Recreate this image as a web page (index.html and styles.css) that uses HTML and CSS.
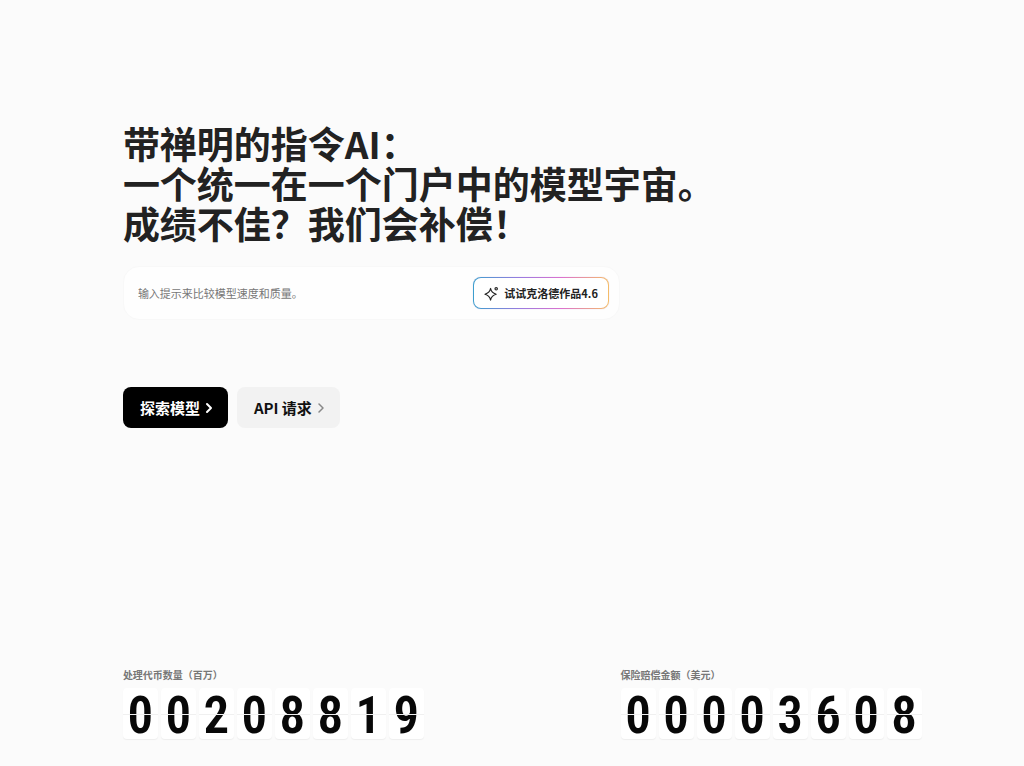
FILE: index.html
```html
<!DOCTYPE html>
<html lang="zh-CN">
<head>
<meta charset="utf-8">
<meta name="viewport" content="width=device-width, initial-scale=1">
<title>带禅明的指令AI</title>
<link rel="stylesheet" href="styles.css">
</head>
<body>
<main class="page">
  <section class="hero">
    <h1 class="title">带禅明的指令AI：<br>一个统一在一个门户中的模型宇宙。<br>成绩不佳？我们会补偿！</h1>
    <form class="prompt">
      <input class="prompt-input" type="text" aria-label="输入提示" placeholder="输入提示来比较模型速度和质量。">
      <button class="try" type="button">
        <svg class="spark" viewBox="0 0 16 16" aria-hidden="true"><path d="M7 2.6C7.7 6.3 9 7.7 13 8.8 9 9.9 7.7 11.3 7 15 6.3 11.3 5 9.9 1 8.8 5 7.7 6.3 6.3 7 2.6Z"/><circle cx="13" cy="3" r="1.3"/></svg>
        <span>试试克洛德作品4.6</span>
      </button>
    </form>
    <nav class="actions">
      <a class="btn btn-dark" href="#models">探索模型<svg class="chevron" viewBox="0 0 8 12" aria-hidden="true"><path d="M2 2l4 4-4 4"/></svg></a>
      <a class="btn btn-light" href="#api">API 请求<svg class="chevron" viewBox="0 0 8 12" aria-hidden="true"><path d="M2 2l4 4-4 4"/></svg></a>
    </nav>
  </section>
  <section class="stats">
    <div class="stat">
      <h2 class="stat-label">处理代币数量（百万）</h2>
      <div class="counter"><span class="digit">0</span><span class="digit">0</span><span class="digit">2</span><span class="digit">0</span><span class="digit">8</span><span class="digit">8</span><span class="digit">1</span><span class="digit">9</span></div>
    </div>
    <div class="stat">
      <h2 class="stat-label">保险赔偿金额（美元）</h2>
      <div class="counter"><span class="digit">0</span><span class="digit">0</span><span class="digit">0</span><span class="digit">0</span><span class="digit">3</span><span class="digit">6</span><span class="digit">0</span><span class="digit">8</span></div>
    </div>
  </section>
</main>
</body>
</html>
```
FILE: styles.css
```css
* { box-sizing: border-box; }
body {
  margin: 0;
  background: #fbfbfb;
  color: #222;
  font-family: "Noto Sans CJK SC", "Noto Sans", sans-serif;
}
.page {
  display: flex;
  flex-direction: column;
  justify-content: space-between;
  min-height: 100vh;
  padding: 123px 10% 27px 12%;
}
.title {
  margin: 0;
  font-size: 37px;
  line-height: 40px;
  font-weight: 700;
}
.prompt {
  display: flex;
  align-items: center;
  max-width: 497px;
  margin-top: 23px;
  padding: 10px 10px 10px 14px;
  border: 1px solid #f8f8f8;
  border-radius: 16px;
  background: #fefefe;
}
.prompt-input {
  flex: 1;
  min-width: 0;
  padding: 0;
  border: 0;
  outline: 0;
  background: transparent;
  color: #222;
  font: 400 11px/20px "Noto Sans CJK SC", "Noto Sans", sans-serif;
}
.prompt-input::placeholder { color: #777; opacity: 1; }
.try {
  display: flex;
  align-items: center;
  justify-content: center;
  gap: 5px;
  height: 32px;
  padding: 0 10px;
  border: 1px solid transparent;
  border-radius: 8px;
  background:
    linear-gradient(#fff, #fff) padding-box,
    linear-gradient(90deg, #3c9fce, #9b7be0 35%, #dc72cf 65%, #f5bd68) border-box;
  box-shadow: 0 0 1px #c9b8dc;
  color: #222;
  font: 700 11px/20px "Noto Sans CJK SC", "Noto Sans", sans-serif;
  white-space: nowrap;
}
.spark {
  width: 15px;
  height: 15px;
  fill: none;
  stroke: #222;
  stroke-width: 1.2;
  stroke-linejoin: round;
}
.actions {
  display: flex;
  gap: 9px;
  margin-top: 67px;
}
.btn {
  display: flex;
  align-items: center;
  gap: 5px;
  height: 41px;
  padding: 0 15px 0 17px;
  border-radius: 8px;
  font-size: 15px;
  line-height: 20px;
  font-weight: 700;
  text-decoration: none;
}
.btn-dark { background: #000; color: #fff; }
.btn-light { background: #f2f2f2; color: #111; }
.chevron {
  width: 8px;
  height: 12px;
  fill: none;
  stroke: currentColor;
  stroke-width: 2;
  stroke-linecap: round;
  stroke-linejoin: round;
}
.btn-light .chevron { stroke: #888; stroke-width: 1.5; }
.stats {
  display: flex;
  flex-wrap: wrap;
  justify-content: space-between;
  gap: 24px;
}
.stat-label {
  margin: 0 0 5px;
  color: #777;
  font-size: 10px;
  line-height: 16px;
  font-weight: 700;
}
.counter { display: flex; gap: 3px; }
.digit {
  position: relative;
  width: 35px;
  height: 51px;
  border-radius: 4px;
  background: #fff;
  box-shadow: 0 1px 1px #eee;
  color: #080808;
  font: 600 51px/55px "Roboto Condensed", "Liberation Sans Narrow", sans-serif;
  text-align: center;
}
.digit::after {
  content: "";
  position: absolute;
  inset: 26px 0 auto;
  height: 1px;
  background: #f0f0f0;
}
```
